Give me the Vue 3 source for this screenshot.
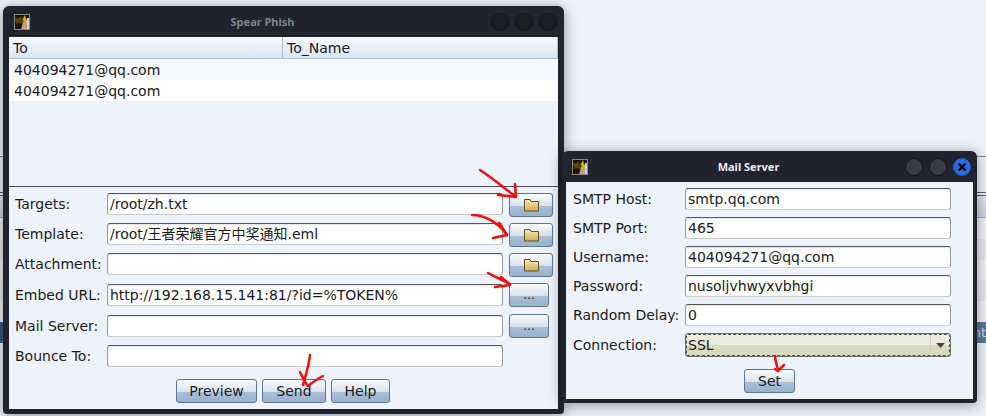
<script setup>
const rows = ['404094271@qq.com', '404094271@qq.com']

const phishFields = [
  { label: 'Targets:', value: '/root/zh.txt', action: 'folder' },
  { label: 'Template:', value: '/root/王者荣耀官方中奖通知.eml', action: 'folder' },
  { label: 'Attachment:', value: '', action: 'folder' },
  { label: 'Embed URL:', value: 'http://192.168.15.141:81/?id=%TOKEN%', action: 'dots' },
  { label: 'Mail Server:', value: '', action: 'dots' },
  { label: 'Bounce To:', value: '', action: '' }
]

const serverFields = [
  { label: 'SMTP Host:', value: 'smtp.qq.com' },
  { label: 'SMTP Port:', value: '465' },
  { label: 'Username:', value: '404094271@qq.com' },
  { label: 'Password:', value: 'nusoljvhwyxvbhgi' },
  { label: 'Random Delay:', value: '0' }
]

// red marks drawn over the screenshot
const strokes = [
  'M480 170 C491 177 504 188 515 196',
  'M515 184 L516 197 L498 195',
  'M472 215 C484 215 498 222 507 235',
  'M499 223 L507 235 L493 238',
  'M488 273 C495 277 503 280 510 284',
  'M501 277 L510 285 L495 287',
  'M310 355 C309 366 305 377 303 385',
  'M300 372 C303 378 305 383 308 386 C312 383 317 379 323 376',
  'M775 356 C775 361 777 365 778 370',
  'M775 369 L778 371 L784 365'
]

const bands = [0, 1, 2, 3, 4]
</script>

<template>
  <div class="desktop">
    <div class="backdrop">
      <div class="bd-head"></div>
      <div v-for="b in bands" :key="b" class="bd-band"></div>
      <div class="bd-tab">nt</div>
    </div>

    <section class="window phish">
      <header class="titlebar">
        <span class="app-icon">
          <svg width="16" height="16" viewBox="0 0 16 16">
            <rect width="16" height="16" fill="#1b1409" />
            <path d="M1 3l3 2 2-3 2 4 3-5 1 6-3 3-4-1-3 1z" fill="#5b4410" />
            <path d="M7 1l2 4 2-4 1 5 2-2v4l-4 0z" fill="#d9b820" />
            <path d="M9 8h4v8H7l1-4z" fill="#c99f72" />
            <path d="M13 4h3v12h-3z" fill="#c9d3dc" />
            <rect x="0.500" y="0.500" width="15" height="15" fill="none" stroke="#8b8b86" />
          </svg>
        </span>
        <h1 class="inactive">Spear Phish</h1>
        <div class="controls">
          <b></b><b></b><b></b>
        </div>
      </header>
      <div class="body">
        <div class="table">
          <div class="thead">
            <span class="col-to">To</span>
            <span>To_Name</span>
          </div>
          <div v-for="(row, i) in rows" :key="i" class="trow">{{ row }}</div>
        </div>
        <div class="form">
          <div v-for="f in phishFields" :key="f.label" class="field" :class="{ tight: f.action === 'dots' }">
            <label>{{ f.label }}</label>
            <div class="input">{{ f.value }}</div>
            <button v-if="f.action === 'folder'" class="btn icon-btn">
              <svg width="15" height="14" viewBox="0 0 15 14">
                <defs>
                  <linearGradient id="folderFill" x1="0" y1="0" x2="0" y2="1">
                    <stop offset="0" stop-color="#f5eab6" />
                    <stop offset="1" stop-color="#cfae52" />
                  </linearGradient>
                </defs>
                <path d="M0.500 1.500h5.500l1 2h7.500v9.500H0.500z" fill="url(#folderFill)" stroke="#5c5120" />
              </svg>
            </button>
            <button v-else-if="f.action === 'dots'" class="btn dots-btn">...</button>
          </div>
          <div class="actions">
            <button class="btn preview">Preview</button>
            <button class="btn send">Send</button>
            <button class="btn help">Help</button>
          </div>
        </div>
      </div>
    </section>

    <section class="window server">
      <header class="titlebar">
        <span class="app-icon">
          <svg width="16" height="16" viewBox="0 0 16 16">
            <rect width="16" height="16" fill="#1b1409" />
            <path d="M1 3l3 2 2-3 2 4 3-5 1 6-3 3-4-1-3 1z" fill="#5b4410" />
            <path d="M7 1l2 4 2-4 1 5 2-2v4l-4 0z" fill="#d9b820" />
            <path d="M9 8h4v8H7l1-4z" fill="#c99f72" />
            <path d="M13 4h3v12h-3z" fill="#c9d3dc" />
            <rect x="0.500" y="0.500" width="15" height="15" fill="none" stroke="#8b8b86" />
          </svg>
        </span>
        <h1>Mail Server</h1>
        <div class="controls active">
          <b></b><b></b>
          <b class="close">
            <svg width="12" height="12" viewBox="0 0 12 12">
              <path d="M2.500 2.500l7 7M9.500 2.500l-7 7" stroke="#000" stroke-width="2.400" />
            </svg>
          </b>
        </div>
      </header>
      <div class="body server-body">
        <div v-for="f in serverFields" :key="f.label" class="server-row">
          <label>{{ f.label }}</label>
          <div class="input">{{ f.value }}</div>
        </div>
        <div class="server-row combo-row">
          <label>Connection:</label>
          <div class="combo">
            <span>SSL</span>
            <em><svg width="9" height="5" viewBox="0 0 9 5"><path d="M0 0h9L4.500 5z" fill="#444" /></svg></em>
          </div>
        </div>
        <div class="set-row"><button class="btn set">Set</button></div>
      </div>
    </section>

    <svg class="marks" width="986" height="416" viewBox="0 0 986 416">
      <path v-for="(d, i) in strokes" :key="i" :d="d" />
    </svg>
  </div>
</template>

<style>
html, body {
  margin: 0;
  background: #eef2fb;
}
</style>

<style scoped>
.desktop {
  position: relative;
  width: 986px;
  height: 416px;
  overflow: hidden;
  background: #eef2fb;
  font-family: "DejaVu Sans", sans-serif;
  font-size: 14px;
  color: #1a1a1a;
}

/* app behind the dialogs, only its edges show */
.backdrop {
  padding-top: 156px;
}

.bd-head {
  height: 60px;
  box-sizing: content-box;
  border-top: 1px solid #7a7f8a;
  border-bottom: 1px solid #8fb0d5;
  background: linear-gradient(#eef2fb 0, #eef2fb 35px, #555a66 35px, #555a66 36px, #eef2fb 36px, #eef2fb 38px, #555a66 38px, #555a66 39px, #dfe6f0 39px, #c8d4e4 100%);
}

.bd-band {
  height: 20.800px;
  background: #f3f3f6;
}

.bd-band:nth-of-type(odd) {
  background: #e9e9ed;
}

.bd-tab {
  height: 21px;
  background: linear-gradient(90deg, #3a5a80 0, #3a5a80 50%, #5b7896 50%);
  color: #cfd8e2;
  font-size: 13px;
  line-height: 21px;
  text-align: right;
}

.window {
  position: absolute;
  box-sizing: border-box;
  display: flex;
  flex-direction: column;
  background: #21242e;
  border-radius: 6px 6px 4px 4px;
  box-shadow: 0 2px 14px rgba(0, 0, 0, 0.4);
}

.phish {
  left: 3px;
  top: 6px;
  width: 561px;
  height: 408px;
  padding: 0 6px 5px 6px;
}

.server {
  left: 562px;
  top: 151px;
  width: 415px;
  height: 252px;
  padding: 0 4px 4px 4px;
}

.titlebar {
  position: relative;
  flex: none;
  height: 31px;
  padding-right: 42px;
  display: flex;
  align-items: center;
  justify-content: center;
}

.titlebar h1 {
  margin: 0;
  font-family: "Noto Sans", sans-serif;
  font-size: 11px;
  font-weight: 700;
  color: #e8ebf0;
}

.titlebar h1.inactive {
  color: #7f8289;
}

.app-icon {
  position: absolute;
  left: 5px;
  top: 8px;
  width: 16px;
  height: 16px;
  display: block;
}

.server .app-icon {
  left: 6px;
}

.app-icon svg {
  display: block;
}

.controls {
  position: absolute;
  right: 1px;
  top: 7px;
  display: flex;
  gap: 6px;
}

.controls b {
  box-sizing: border-box;
  width: 18px;
  height: 18px;
  border-radius: 50%;
  background: #1c1e24;
  border: 1px solid #14151a;
  display: flex;
  align-items: center;
  justify-content: center;
}

.server .controls {
  right: 2px;
}

.controls.active b {
  background: #363b4a;
}

.controls.active b.close {
  background: #2570e8;
  border-color: #1f5ec4;
}

.body {
  flex: 1;
  min-height: 0;
  background: #eef2fb;
  display: flex;
  flex-direction: column;
}

.table {
  flex: none;
  height: 149px;
  border-bottom: 1px solid #4a4a50;
}

.thead {
  display: flex;
  height: 21px;
  line-height: 22px;
  border-bottom: 1px solid #a3c0e0;
  border-right: 1px solid #a3c0e0;
  background: linear-gradient(#f6f8fd, #dbe5f1);
}

.thead span {
  padding-left: 4px;
}

.col-to {
  width: 269px;
  border-right: 1px solid #a3c0e0;
}

.trow {
  height: 21px;
  line-height: 23px;
  padding-left: 5px;
  background: #ffffff;
}

.trow:nth-of-type(2) {
  background: #f5f6fa;
}

.form {
  flex: 1;
  padding: 6px 0 0 6px;
  display: flex;
  flex-direction: column;
}

.field {
  display: flex;
  align-items: flex-start;
  height: 30px;
}

.field label {
  width: 92px;
  flex: none;
  line-height: 22px;
}

.input {
  box-sizing: border-box;
  background: #fff;
  border: 1px solid #9a9a9a;
  border-top-color: #555;
  border-bottom-color: #ccc;
  border-radius: 3px;
  box-shadow: inset 0 1px 1px #e6e6e6;
  font-size: 14px;
  line-height: 20px;
  height: 22px;
  padding-left: 2px;
  white-space: nowrap;
  overflow: hidden;
  font-family: "DejaVu Sans", "Noto Sans CJK SC", sans-serif;
}

.field .input {
  width: 396px;
  flex: none;
}

.btn {
  box-sizing: border-box;
  margin: 0;
  padding: 0;
  border: 1px solid #5e7893;
  border-radius: 3px;
  background: linear-gradient(#fbfcfe 0%, #d7e0ea 54%, #aabfd6 55%, #9bb2cc 100%);
  font-family: "DejaVu Sans", sans-serif;
  font-size: 14px;
  color: #1a1a1a;
  line-height: 1;
  display: flex;
  align-items: center;
  justify-content: center;
}

.icon-btn {
  width: 44px;
  height: 24px;
  margin-left: 6px;
}

.dots-btn {
  width: 40px;
  height: 24px;
  margin-left: 6px;
  margin-top: -1px;
  font-size: 12px;
}

.field.tight {
  margin-top: 1px;
}

.actions {
  display: flex;
  gap: 5px;
  padding-left: 161px;
  margin-top: 4px;
}

.actions .btn {
  height: 24px;
}

.preview { width: 81px; }
.send { width: 64px; }
.help { width: 59px; }

.server-body {
  padding: 6px 0 0 7px;
}

.server-row {
  display: flex;
  align-items: flex-start;
  height: 29px;
}

.server-row label {
  width: 112px;
  flex: none;
  line-height: 22px;
}

.combo-row label {
  line-height: 24px;
}

.server-row .input {
  width: 266px;
  flex: none;
}

.combo {
  box-sizing: border-box;
  width: 266px;
  height: 24px;
  display: flex;
  align-items: stretch;
  border: 1px solid #6b6f66;
  border-radius: 3px;
  outline: 1px dashed #4d5048;
  outline-offset: -2px;
  background: linear-gradient(#ecedde 0%, #e8eadc 50%, #d8dcc0 51%, #d6dabd 100%);
  line-height: 23px;
  padding-left: 2px;
}

.combo span {
  flex: 1;
}

.combo em {
  width: 19px;
  display: flex;
  align-items: center;
  justify-content: center;
  border-left: 1px solid #cfd2bd;
}

.set-row {
  display: flex;
  padding: 7px 0 0 171px;
}

.set {
  width: 51px;
  height: 24px;
}

.marks {
  position: absolute;
  left: 0;
  top: 0;
  pointer-events: none;
}

.marks path {
  fill: none;
  stroke: #f30d0d;
  stroke-width: 2.500;
  stroke-linecap: round;
  stroke-linejoin: round;
}
</style>
